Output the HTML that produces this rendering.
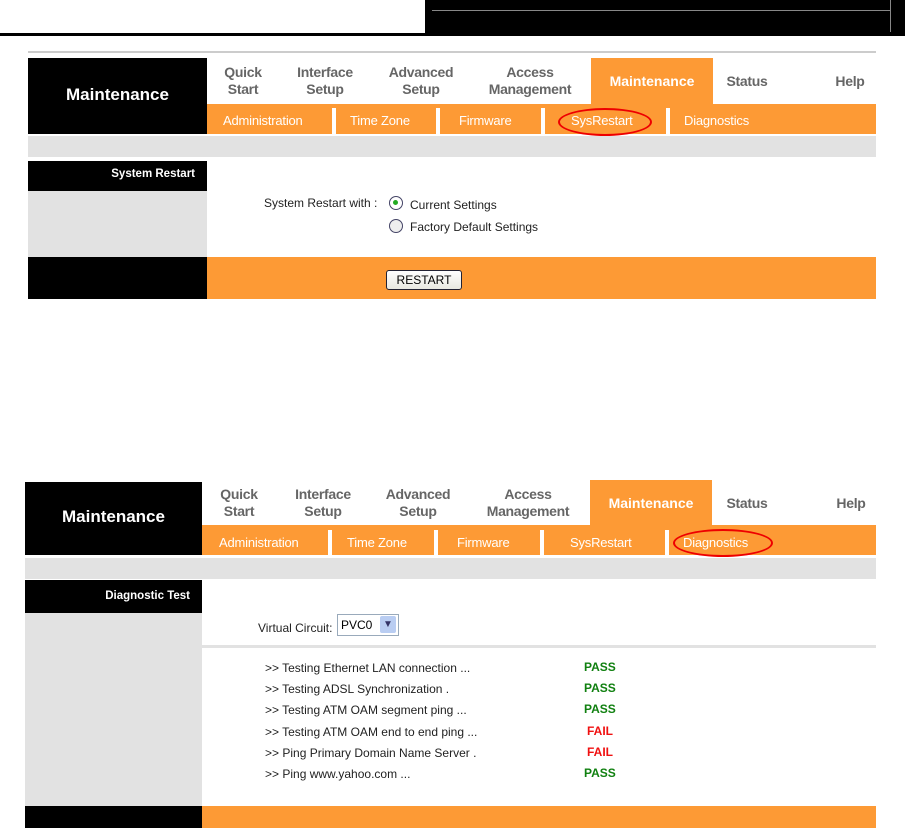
<!DOCTYPE html><html><head><style>
body{margin:0;width:905px;height:828px;position:relative;background:#fff;font-family:"Liberation Sans",sans-serif;overflow:hidden}
.a{position:absolute}
.blk{background:#000}.or{background:#fd9a35}.gr{background:#e2e2e2}
.nav{position:absolute;color:#666;font-weight:bold;font-size:14px;text-align:center;line-height:17px;letter-spacing:-0.3px}
.navw{position:absolute;color:#fff;font-weight:bold;font-size:14px}
.sub{position:absolute;color:#fff;font-size:13px;letter-spacing:-0.2px}
.sep{position:absolute;width:4px;background:#fff}
.t{position:absolute;font-size:12px;color:#222}
.p{position:absolute;font-size:12px;font-weight:bold;color:#108010}
.f{position:absolute;font-size:12px;font-weight:bold;color:#f01010}
.ell{position:absolute;border:2px solid #e00;border-radius:50%}
</style></head><body>
<div class="a blk" style="left:0;top:33px;width:425px;height:3px"></div>
<div class="a blk" style="left:425px;top:0;width:480px;height:36px"></div>
<div class="a" style="left:432px;top:10px;width:458px;height:1px;background:#888"></div>
<div class="a" style="left:890px;top:0;width:1px;height:32px;background:#888"></div>

<div class="a" style="left:28px;top:51px;width:848px;height:2px;background:#ccc"></div>
<div class="a blk" style="left:28px;top:58px;width:179px;height:76px"></div>
<div class="a" style="left:28px;top:85px;width:179px;text-align:center;color:#fff;font-weight:bold;font-size:17px">Maintenance</div>
<div class="nav" style="left:213px;top:64px;width:60px">Quick<br>Start</div>
<div class="nav" style="left:285px;top:64px;width:80px">Interface<br>Setup</div>
<div class="nav" style="left:380px;top:64px;width:82px">Advanced<br>Setup</div>
<div class="nav" style="left:478px;top:64px;width:104px">Access<br>Management</div>
<div class="a or" style="left:591px;top:58px;width:122px;height:46px"></div>
<div class="navw" style="left:591px;top:73px;width:122px;text-align:center">Maintenance</div>
<div class="nav" style="left:722px;top:73px;width:50px">Status</div>
<div class="nav" style="left:830px;top:73px;width:40px">Help</div>
<div class="a or" style="left:207px;top:104px;width:669px;height:30px"></div>
<div class="sub" style="left:223px;top:113px">Administration</div>
<div class="sep" style="left:332px;top:108px;height:26px"></div>
<div class="sub" style="left:350px;top:113px">Time Zone</div>
<div class="sep" style="left:436px;top:108px;height:26px"></div>
<div class="sub" style="left:459px;top:113px">Firmware</div>
<div class="sep" style="left:541px;top:108px;height:26px"></div>
<div class="sub" style="left:571px;top:113px">SysRestart</div>
<div class="ell" style="left:558px;top:108px;width:90px;height:24px"></div>
<div class="sep" style="left:666px;top:108px;height:26px"></div>
<div class="sub" style="left:684px;top:113px">Diagnostics</div>
<div class="a gr" style="left:28px;top:136px;width:848px;height:21px"></div>
<div class="a blk" style="left:28px;top:161px;width:179px;height:30px"></div>
<div class="a" style="left:28px;top:168px;width:167px;text-align:right;color:#fff;font-weight:bold;font-size:11.5px">System Restart</div>
<div class="a gr" style="left:28px;top:191px;width:179px;height:66px"></div>
<div class="t" style="left:264px;top:196px">System Restart with :</div>
<div class="a" style="left:389px;top:196px;width:12px;height:12px;border:1px solid #446;border-radius:50%;background:#fff"></div>
<div class="a" style="left:393px;top:200px;width:5px;height:5px;border-radius:50%;background:#2a2"></div>
<div class="t" style="left:410px;top:198px">Current Settings</div>
<div class="a" style="left:389px;top:219px;width:12px;height:12px;border:1px solid #446;border-radius:50%;background:#eee"></div>
<div class="t" style="left:410px;top:220px">Factory Default Settings</div>
<div class="a blk" style="left:28px;top:257px;width:179px;height:42px"></div>
<div class="a or" style="left:207px;top:257px;width:669px;height:42px"></div>
<div class="a" style="left:386px;top:270px;width:74px;height:18px;border:1px solid #223;border-radius:3px;background:linear-gradient(#fff,#e8e8e0);font-size:12px;text-align:center;line-height:18px;color:#000">RESTART</div>

<div class="a blk" style="left:25px;top:482px;width:177px;height:73px"></div>
<div class="a" style="left:25px;top:507px;width:177px;text-align:center;color:#fff;font-weight:bold;font-size:17px">Maintenance</div>
<div class="nav" style="left:209px;top:486px;width:60px">Quick<br>Start</div>
<div class="nav" style="left:283px;top:486px;width:80px">Interface<br>Setup</div>
<div class="nav" style="left:377px;top:486px;width:82px">Advanced<br>Setup</div>
<div class="nav" style="left:476px;top:486px;width:104px">Access<br>Management</div>
<div class="a or" style="left:590px;top:480px;width:122px;height:45px"></div>
<div class="navw" style="left:590px;top:495px;width:122px;text-align:center">Maintenance</div>
<div class="nav" style="left:722px;top:495px;width:50px">Status</div>
<div class="nav" style="left:831px;top:495px;width:40px">Help</div>
<div class="a or" style="left:202px;top:525px;width:674px;height:30px"></div>
<div class="sub" style="left:219px;top:535px">Administration</div>
<div class="sep" style="left:328px;top:530px;height:25px"></div>
<div class="sub" style="left:347px;top:535px">Time Zone</div>
<div class="sep" style="left:434px;top:530px;height:25px"></div>
<div class="sub" style="left:457px;top:535px">Firmware</div>
<div class="sep" style="left:540px;top:530px;height:25px"></div>
<div class="sub" style="left:570px;top:535px">SysRestart</div>
<div class="sep" style="left:665px;top:530px;height:25px"></div>
<div class="sub" style="left:683px;top:535px">Diagnostics</div>
<div class="ell" style="left:673px;top:529px;width:96px;height:24px"></div>
<div class="a gr" style="left:25px;top:558px;width:851px;height:21px"></div>
<div class="a blk" style="left:25px;top:580px;width:177px;height:33px"></div>
<div class="a" style="left:25px;top:590px;width:165px;text-align:right;color:#fff;font-weight:bold;font-size:11.5px">Diagnostic Test</div>
<div class="a gr" style="left:25px;top:613px;width:177px;height:193px"></div>
<div class="t" style="left:258px;top:621px">Virtual Circuit:</div>
<div class="a" style="left:337px;top:614px;width:60px;height:20px;border:1px solid #9ab;background:#fff"></div>
<div class="t" style="left:341px;top:618px;color:#000">PVC0</div>
<div class="a" style="left:380px;top:616px;width:16px;height:17px;background:#b9cdf2;border-radius:2px;color:#336;font-size:10px;text-align:center;line-height:17px">&#9660;</div>
<div class="a gr" style="left:202px;top:645px;width:674px;height:3px"></div>
<div class="t" style="left:265px;top:661px">&gt;&gt; Testing Ethernet LAN connection ...</div>
<div class="t" style="left:265px;top:682px">&gt;&gt; Testing ADSL Synchronization .</div>
<div class="t" style="left:265px;top:703px">&gt;&gt; Testing ATM OAM segment ping ...</div>
<div class="t" style="left:265px;top:725px">&gt;&gt; Testing ATM OAM end to end ping ...</div>
<div class="t" style="left:265px;top:746px">&gt;&gt; Ping Primary Domain Name Server .</div>
<div class="t" style="left:265px;top:767px">&gt;&gt; Ping www.yahoo.com ...</div>
<div class="p" style="left:584px;top:660px">PASS</div>
<div class="p" style="left:584px;top:681px">PASS</div>
<div class="p" style="left:584px;top:702px">PASS</div>
<div class="f" style="left:587px;top:724px">FAIL</div>
<div class="f" style="left:587px;top:745px">FAIL</div>
<div class="p" style="left:584px;top:766px">PASS</div>
<div class="a blk" style="left:25px;top:806px;width:177px;height:22px"></div>
<div class="a or" style="left:202px;top:806px;width:674px;height:22px"></div>
</body></html>
